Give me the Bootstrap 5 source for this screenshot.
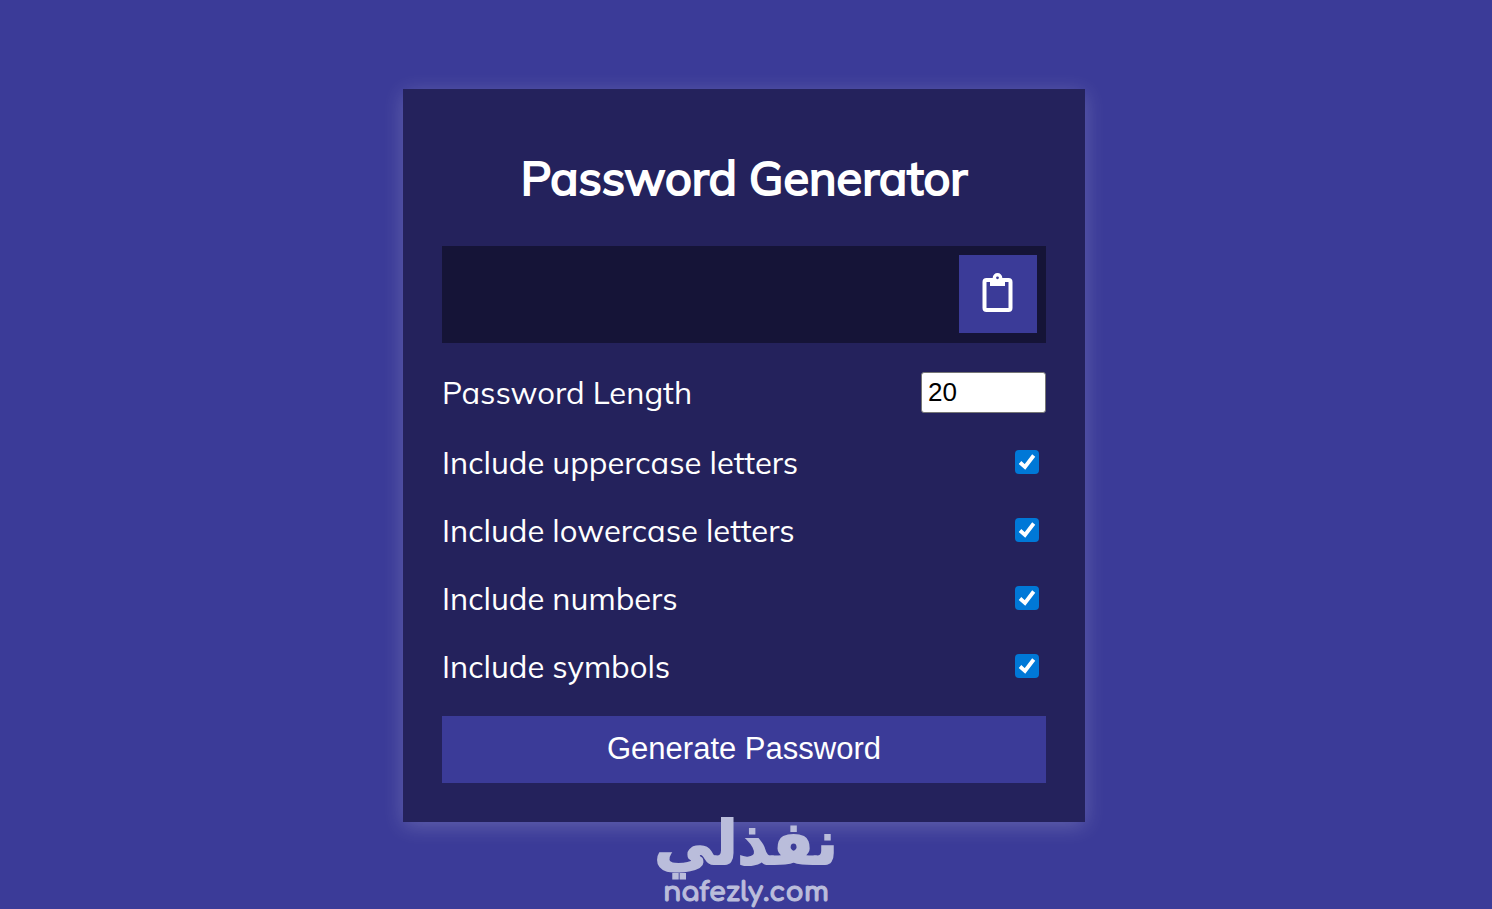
<!DOCTYPE html>
<html lang="en">
<head>
<meta charset="utf-8">
<meta name="viewport" content="width=device-width, initial-scale=1">
<title>Password Generator</title>
<link href="https://cdn.jsdelivr.net/npm/bootstrap@5.3.0/dist/css/bootstrap.min.css" rel="stylesheet">
<style>
html { background: #3b3b98; }
body { background: transparent; color: #fff; font-family: Muli, Mulish, Lato, sans-serif; font-size: 31px; line-height: 39px; font-variant-ligatures: none; }
.page { padding: 89px 4px 0 0; }
.generator { max-width: 682px; padding: 39px; background: #24225c; box-shadow: 0 4px 20px rgba(255, 255, 255, .2); }
.generator h1 { font-size: 47px; line-height: 60px; font-weight: 400; -webkit-text-stroke: 2px #fff; margin: 20px 0 38px; }
.result { background: rgba(0, 0, 0, .4); padding: 9px; height: 97px; }
.result output { font-size: 28px; }
.btn-flat { background: #3b3b98; color: #fff; border-radius: 0; border: 0; }
.btn-flat:hover { background: #4a4aa8; color: #fff; }
.copy { width: 78px; height: 78px; padding: 0 0 2px; }
.options { margin: 29px 0 30px; gap: 29px; }
.length { width: 125px; height: 41px; padding: 0 6px; font: 26px/36px "Liberation Sans", Arial, sans-serif; color: #000; border: 1px solid #767676; border-radius: 3px; background: #fff; }
.length-row { height: 42px; line-height: 41px; }
.generator .tick { width: 24px; height: 24px; margin: 0 7px 2px 0; border: 0; border-radius: 4px; }
.generator .tick:checked {
  background-color: #0078d7;
  background-size: 24px;
  background-image: url("data:image/svg+xml,%3Csvg xmlns='http://www.w3.org/2000/svg' viewBox='0 0 24 24'%3E%3Cpath d='M5 12.5l5 4.500L18.700 5.500' fill='none' stroke='%23fff' stroke-width='3.800'/%3E%3C/svg%3E");
}
.generate { height: 67px; padding: 0 0 2px; font: 31px/36px "Liberation Sans", Arial, sans-serif; }
.brand { left: 0; right: 0; bottom: 0; height: 98px; color: #babddb; pointer-events: none; }
.brand-ar { font: 700 60px/64px "DejaVu Sans", sans-serif; -webkit-text-stroke: 2px #babddb; }
.brand-en { font: 700 27px/34px Comfortaa, Quicksand, Lato, sans-serif; -webkit-text-stroke: 1px #babddb; }
</style>
</head>
<body class="min-vh-100">
<main class="page min-vh-100">
  <form class="generator mx-auto">
    <h1 class="text-center">Password Generator</h1>
    <div class="result d-flex align-items-start justify-content-end">
      <output class="flex-grow-1" aria-label="Generated password"></output>
      <button type="button" class="btn btn-flat copy d-flex align-items-center justify-content-center" aria-label="Copy to clipboard">
        <svg width="32" height="40" viewBox="0 0 32 40" aria-hidden="true">
          <rect x="2.500" y="7" width="26" height="30" rx="2" fill="none" stroke="#fff" stroke-width="4"/>
          <path fill="#fff" d="M8 6h15v7H8z"/>
          <circle cx="15.500" cy="4.800" r="3.100" fill="#3b3b98" stroke="#fff" stroke-width="3.400"/>
        </svg>
      </button>
    </div>
    <div class="options d-flex flex-column">
      <div class="length-row d-flex justify-content-between align-items-start">
        <label for="length">Password Length</label>
        <input class="length" type="number" id="length" min="4" max="20" value="20">
      </div>
      <div class="d-flex justify-content-between align-items-center">
        <label for="uppercase">Include uppercase letters</label>
        <input class="form-check-input tick" type="checkbox" id="uppercase" checked>
      </div>
      <div class="d-flex justify-content-between align-items-center">
        <label for="lowercase">Include lowercase letters</label>
        <input class="form-check-input tick" type="checkbox" id="lowercase" checked>
      </div>
      <div class="d-flex justify-content-between align-items-center">
        <label for="numbers">Include numbers</label>
        <input class="form-check-input tick" type="checkbox" id="numbers" checked>
      </div>
      <div class="d-flex justify-content-between align-items-center">
        <label for="symbols">Include symbols</label>
        <input class="form-check-input tick" type="checkbox" id="symbols" checked>
      </div>
    </div>
    <button type="button" class="btn btn-flat generate w-100">Generate Password</button>
  </form>
</main>
<div class="brand position-absolute d-flex flex-column align-items-center">
  <span class="brand-ar" lang="ar" dir="rtl">نفذلي</span>
  <span class="brand-en">nafezly.com</span>
</div>
<script src="https://cdn.jsdelivr.net/npm/bootstrap@5.3.0/dist/js/bootstrap.bundle.min.js"></script>
</body>
</html>
